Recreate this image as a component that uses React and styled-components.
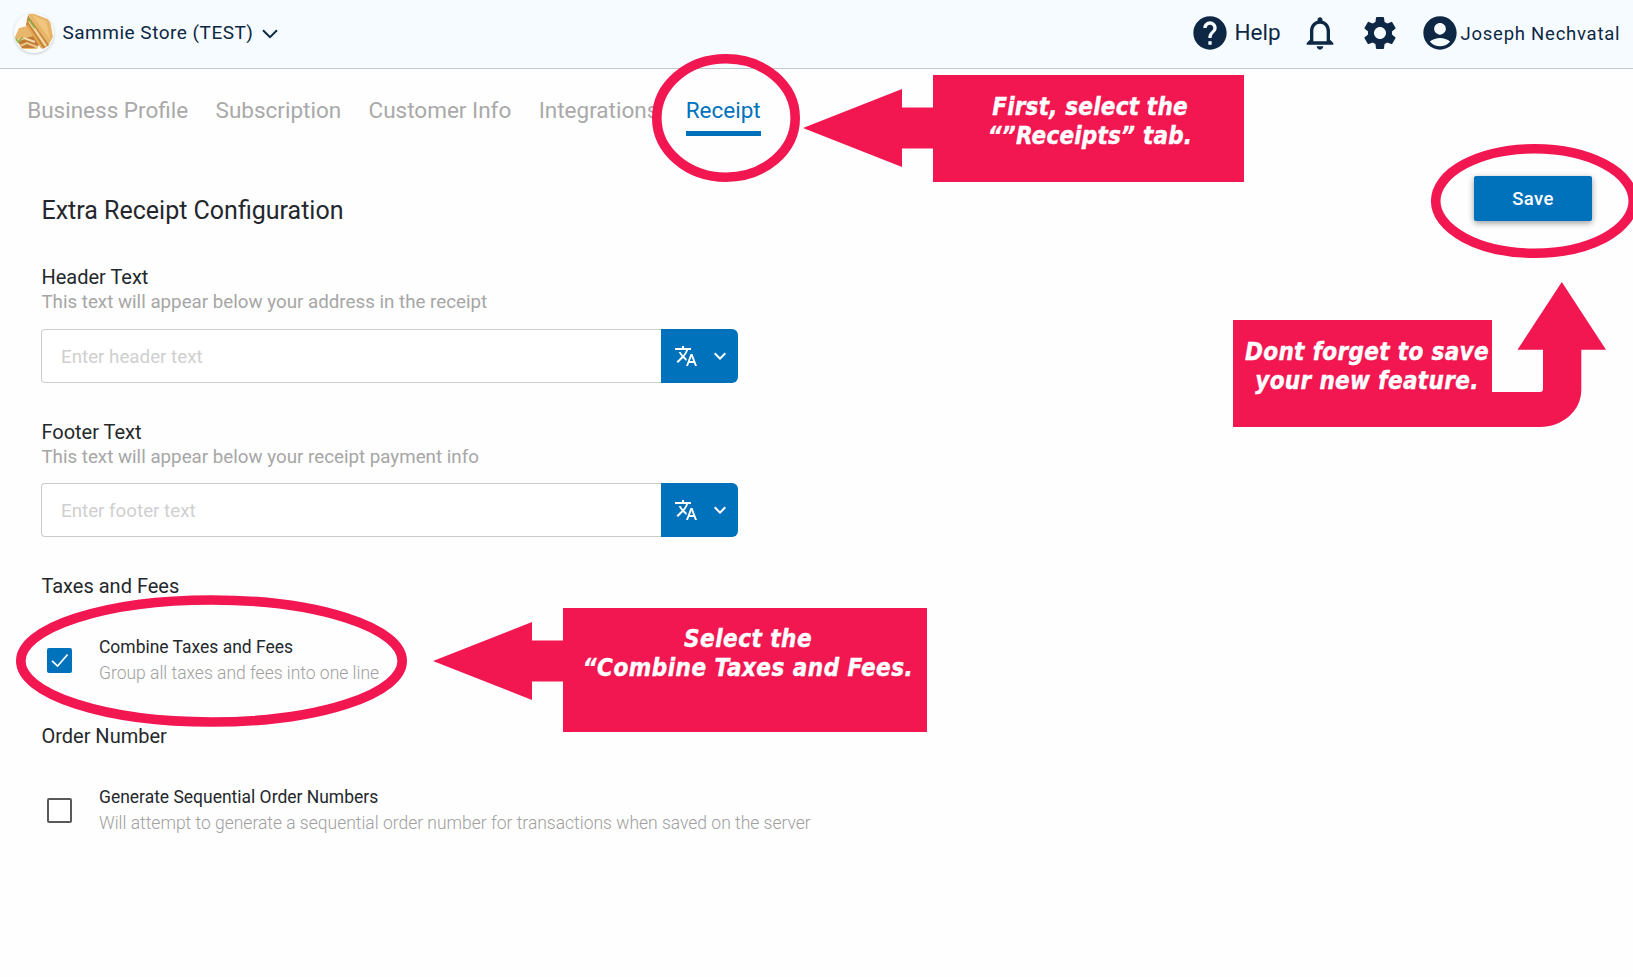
import React, { useState } from "react"
import styled, { createGlobalStyle } from "styled-components"
import {
  MdHelp,
  MdNotificationsNone,
  MdSettings,
  MdAccountCircle,
  MdTranslate,
  MdKeyboardArrowDown,
} from "react-icons/md"

const tabs = [
  "Business Profile",
  "Subscription",
  "Customer Info",
  "Integrations",
  "Receipt",
]

const fields = [
  {
    label: "Header Text",
    help: "This text will appear below your address in the receipt",
    placeholder: "Enter header text",
    gap: 15,
  },
  {
    label: "Footer Text",
    help: "This text will appear below your receipt payment info",
    placeholder: "Enter footer text",
    gap: 14,
  },
]

const options = [
  {
    section: "Taxes and Fees",
    label: "Combine Taxes and Fees",
    help: "Group all taxes and fees into one line",
    checked: true,
  },
  {
    section: "Order Number",
    label: "Generate Sequential Order Numbers",
    help: "Will attempt to generate a sequential order number for transactions when saved on the server",
    checked: false,
  },
]

const callouts = [
  {
    lines: ["First, select the", "“”Receipts” tab."],
    box: { x: 933, y: 75, w: 311, h: 107 },
    pad: "18px 0 0 3px",
    spacing: 0.2,
  },
  {
    lines: ["Dont forget to save", "your new feature."],
    box: { x: 1233, y: 320, w: 259, h: 107 },
    pad: "18px 0 0 9px",
    spacing: 0.34,
  },
  {
    lines: ["Select the", "“Combine Taxes and Fees."],
    box: { x: 563, y: 608, w: 364, h: 124 },
    pad: "17px 0 0 6px",
    spacing: 0.48,
  },
]

const StoreLogo = () => (
  <Avatar viewBox="0 0 40 40">
    <defs>
      <clipPath id="round">
        <circle cx="20" cy="20" r="19.5" />
      </clipPath>
    </defs>
    <g clipPath="url(#round)">
      <rect width="40" height="40" fill="#fdfcfa" />
      <path d="M1 24 L5 15 L13 13 L26 29 L23 36 L8 36 Z" fill="#e8b76c" />
      <path d="M3 27 L20 23 L25 32 L20 35 L8 35 Z" fill="#c07c36" />
      <path d="M3 28 L10 25 L21 29" stroke="#f3dcae" strokeWidth="2" fill="none" />
      <path d="M6 33 L13 30 L23 34" stroke="#e9c58b" strokeWidth="2" fill="none" />
      <path d="M1 25 L4 29 L9 24" stroke="#93b34a" strokeWidth="1.6" fill="none" />
      <path d="M14 1 L18 0 L36 7 L39 24 L34 33 Z" fill="#e8b568" />
      <path d="M18 2 L32 8 L36 26 Z" fill="#f0c67f" />
      <path d="M14 2 L12 12 L29 36 L35 32 Z" fill="#c98339" />
      <path d="M15 8 L32 33" stroke="#f1d7a0" strokeWidth="2.4" />
      <path d="M13 12 L28 35" stroke="#e2a755" strokeWidth="2.2" />
      <path d="M14 5 L21 15" stroke="#8fae3f" strokeWidth="1.8" />
    </g>
  </Avatar>
)

const App = () => {
  const [active, setActive] = useState("Receipt")
  const [checked, setChecked] = useState(options.map(item => item.checked))

  const toggle = index =>
    setChecked(checked.map((value, i) => (i === index ? !value : value)))

  return (
    <Page>
      <GlobalStyle />
      <TopBar>
        <StoreLogo />
        <StoreName>Sammie Store (TEST)</StoreName>
        <StoreArrow viewBox="0 0 16 10">
          <path d="M1 1.2 L8 8.2 L15 1.2" />
        </StoreArrow>
        <TopActions>
          <MdHelp />
          <HelpText>Help</HelpText>
          <MdNotificationsNone />
          <MdSettings />
          <MdAccountCircle />
          <UserName>Joseph Nechvatal</UserName>
        </TopActions>
      </TopBar>

      <Tabs>
        {tabs.map(tab => (
          <Tab key={tab} $active={tab === active} onClick={() => setActive(tab)}>
            {tab}
          </Tab>
        ))}
      </Tabs>

      <Content>
        <Form>
          <Heading>Extra Receipt Configuration</Heading>
          {fields.map(item => (
            <Field key={item.label}>
              <Label>{item.label}</Label>
              <FieldHelp>{item.help}</FieldHelp>
              <InputGroup $gap={item.gap}>
                <Input placeholder={item.placeholder} />
                <LanguageButton>
                  <MdTranslate />
                  <MdKeyboardArrowDown />
                </LanguageButton>
              </InputGroup>
            </Field>
          ))}
          {options.map((item, index) => (
            <Section key={item.section}>
              <Label>{item.section}</Label>
              <Option>
                <Checkbox
                  role="checkbox"
                  aria-checked={checked[index]}
                  $checked={checked[index]}
                  onClick={() => toggle(index)}
                >
                  {checked[index] && (
                    <svg width="25" height="25" viewBox="0 0 25 25">
                      <path d="M5 12.8 L10.6 18 L20.6 6.5" />
                    </svg>
                  )}
                </Checkbox>
                <div>
                  <OptionLabel>{item.label}</OptionLabel>
                  <OptionHelp>{item.help}</OptionHelp>
                </div>
              </Option>
            </Section>
          ))}
        </Form>
        <SaveButton>Save</SaveButton>
      </Content>

      <Markup viewBox="0 0 1633 977">
        <g className="rings">
          <ellipse cx="726" cy="118" rx="69.2" ry="59.2" />
          <ellipse cx="1534.5" cy="201" rx="98.8" ry="52.2" />
          <ellipse cx="211.5" cy="661" rx="190.7" ry="61" />
        </g>
        <path d="M803 128 L902 89 V107.5 H934 V148.5 H902 V167 Z" />
        <path d="M433 661 L532 622 V640.5 H564 V681.5 H532 V700 Z" />
        <path d="M1491 392 H1540 Q1543 392 1543 389 V349.7 H1517.5 L1561.8 282 L1606 349.7 H1581.3 V390 C1581.3 411 1562 427 1540 427 H1491 Z" />
      </Markup>
      {callouts.map((item, index) => (
        <Callout key={index} $box={item.box} $pad={item.pad} $spacing={item.spacing}>
          {item.lines.map(line => (
            <span key={line}>{line}</span>
          ))}
        </Callout>
      ))}
    </Page>
  )
}

export default App


const GlobalStyle = createGlobalStyle`
  * {
    box-sizing: border-box;
  }

  body {
    margin: 0;
    overflow: hidden;
    background: #fff;
    font-family: Roboto, "Liberation Sans", sans-serif;
  }
`

const Page = styled.div`
  position: relative;
  width: 1633px;
  height: 977px;
  overflow: hidden;
  background: #fefefe;
`

const TopBar = styled.header`
  display: flex;
  align-items: center;
  height: 69px;
  padding: 0 14px 2px 14px;
  background: #f5fbff;
  border-bottom: 1px solid #c3c7cb;
  color: #0d2744;
`

const Avatar = styled.svg`
  width: 40px;
  height: 40px;
  border-radius: 50%;
  box-shadow: 0 1px 3px rgba(0, 0, 0, 0.2);
`

const StoreName = styled.span`
  margin-left: 8.5px;
  font-size: 19px;
  line-height: 24px;
  letter-spacing: 0.5px;
`

const StoreArrow = styled.svg`
  width: 16px;
  height: 10px;
  margin: 1px 0 0 8.5px;
  fill: none;
  stroke: #0d2744;
  stroke-width: 2;
`

const TopActions = styled.div`
  display: flex;
  align-items: center;
  margin-left: auto;

  svg {
    width: 40px;
    height: 40px;
    margin-right: 20px;
  }

  svg:first-child {
    margin-right: 4.5px;
  }

  svg:nth-last-child(2) {
    margin-right: 0;
  }
`

const HelpText = styled.span`
  width: 65.5px;
  padding-bottom: 2px;
  font-size: 22.5px;
  line-height: 28px;
`

const UserName = styled.span`
  width: 159px;
  padding: 2px 0 0 0.5px;
  font-size: 18.5px;
  line-height: 24px;
  letter-spacing: 0.76px;
  white-space: nowrap;
`

const Tabs = styled.nav`
  display: flex;
  gap: 27.4px;
  padding: 28px 0 0 27.2px;
`

const Tab = styled.button`
  padding: 0 0 8px;
  border: 0;
  border-bottom: 5px solid ${({ $active }) => ($active ? "#0072bc" : "transparent")};
  background: none;
  color: ${({ $active }) => ($active ? "#0072bc" : "#a9a9a9")};
  font-family: inherit;
  font-size: 22.5px;
  line-height: 26px;
`

const Content = styled.main`
  display: flex;
  justify-content: space-between;
  align-items: flex-start;
  padding: 40px 41px 0;
`

const Form = styled.div`
  width: 800px;
  padding-top: 20px;
`

const Heading = styled.h1`
  margin: 0 0 3px 0.5px;
  color: #24282c;
  font-size: 25px;
  font-weight: 400;
  line-height: 30px;
`

const Field = styled.div`
  padding-top: 36px;

  & + & {
    padding-top: 37px;
  }
`

const Label = styled.div`
  margin: 0 0 1px 0.4px;
  color: #24282c;
  font-size: 20px;
  line-height: 24px;
`

const FieldHelp = styled.div`
  margin-left: 0.4px;
  color: #a6a6a6;
  font-size: 18.75px;
  line-height: 24px;
`

const InputGroup = styled.div`
  display: flex;
  width: 697px;
  height: 54px;
  margin-top: ${({ $gap }) => $gap}px;
`

const Input = styled.input`
  flex: 1;
  padding: 2px 20px 0 19px;
  border: 1px solid #cbcbcb;
  border-right: 0;
  border-radius: 4px 0 0 4px;
  background: #fff;
  font-family: inherit;
  font-size: 18.75px;

  &::placeholder {
    color: #cfcfcf;
  }
`

const LanguageButton = styled.button`
  display: flex;
  align-items: center;
  justify-content: space-between;
  width: 77px;
  padding: 0 6px 0 13px;
  border: 0;
  border-radius: 0 6px 6px 0;
  background: #0072bc;
  color: #fff;

  svg {
    width: 24px;
    height: 24px;
  }
`

const Section = styled.section`
  padding-top: 37px;

  & + & {
    padding-top: 38px;
  }
`

const Option = styled.div`
  display: flex;
  align-items: center;
  gap: 27px;
  margin-top: 36px;
  padding-left: 6px;
`

const Checkbox = styled.button`
  display: flex;
  width: 25px;
  height: 25px;
  padding: 0;
  border: ${({ $checked }) => ($checked ? "0" : "2px solid #58595b")};
  border-radius: 2px;
  background: ${({ $checked }) => ($checked ? "#0072bc" : "#fff")};

  path {
    fill: none;
    stroke: #fff;
    stroke-width: 1.7;
  }
`

const OptionLabel = styled.div`
  color: #24282c;
  font-size: 17.48px;
  line-height: 26px;
`

const OptionHelp = styled.div`
  color: #a0a0a0;
  font-size: 17.49px;
  font-weight: 300;
  line-height: 26px;
  white-space: nowrap;
`

const SaveButton = styled.button`
  width: 118px;
  height: 45px;
  padding: 0;
  border: 0;
  border-radius: 2px;
  background: #0072bc;
  box-shadow: 0 2px 6px rgba(0, 0, 0, 0.4);
  color: #fff;
  font-family: inherit;
  font-size: 18.5px;
  font-weight: 500;
  letter-spacing: 0.4px;
`

// Tutorial rings and arrows drawn over the page
const Markup = styled.svg`
  position: absolute;
  top: 0;
  left: 0;
  width: 1633px;
  height: 977px;
  fill: #f21651;
  pointer-events: none;

  .rings {
    fill: none;
    stroke: #f21651;
    stroke-width: 9.6;
  }
`

const Callout = styled.div`
  position: absolute;
  top: ${({ $box }) => $box.y}px;
  left: ${({ $box }) => $box.x}px;
  display: flex;
  flex-direction: column;
  align-items: center;
  width: ${({ $box }) => $box.w}px;
  height: ${({ $box }) => $box.h}px;
  padding: ${({ $pad }) => $pad};
  background: #f21651;
  color: #fff;
  font-family: "DejaVu Sans Condensed", "DejaVu Sans", sans-serif;
  font-size: 24px;
  font-stretch: condensed;
  font-style: italic;
  font-weight: 700;
  letter-spacing: ${({ $spacing }) => $spacing}px;
  line-height: 29px;
  white-space: nowrap;
  -webkit-text-stroke: 0.4px #fff;
`
